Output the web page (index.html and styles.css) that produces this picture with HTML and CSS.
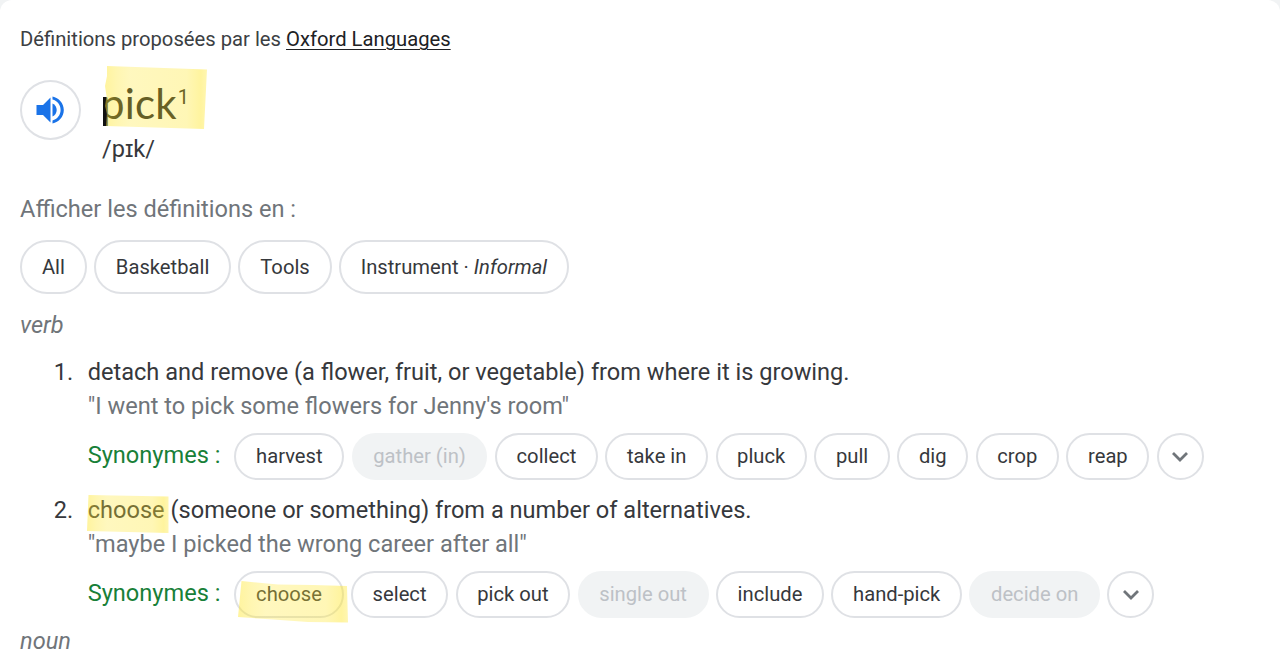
FILE: index.html
```html
<!DOCTYPE html>
<html lang="fr">
<head>
    <meta charset="UTF-8">
    <meta name="viewport" content="width=device-width, initial-scale=1.0">
    <title>pick - Définitions</title>
    <link rel="stylesheet" href="styles.css">
</head>
<body>
    <div class="card">
        <p class="source">Définitions proposées par les <a href="#">Oxford Languages</a></p>

        <div class="entry">
            <button class="audio" aria-label="Écouter">
                <svg width="30" height="30" viewBox="0 0 30 30" fill="#1a73e8">
                    <path d="M.5 10h6.500l7.500-7.500v25l-7.500-7.500H.5z"/>
                    <path d="M16.500 8.500c2.500 1.100 4.200 3.700 4.200 6.500s-1.700 5.400-4.200 6.500z"/>
                    <path d="M16.500 1.500c6.300 1.200 11.300 6.800 11.300 13.500S22.800 27.300 16.500 28.500v-3.100c4.800-1.200 8.100-5.400 8.100-10.400S21.300 5.800 16.500 4.600z"/>
                </svg>
            </button>
            <div>
                <h1 class="word"><span class="caret"></span>pick<sup>1</sup>
                    <svg class="mark mark-word" width="106" height="64" viewBox="0 0 106 64">
                        <path d="M6 0L106 3.500 103 63 5 60 6 48 4 40 5.500 30 4 20 6 10z"/>
                    </svg>
                </h1>
                <p class="phonetic">/pɪk/</p>
            </div>
        </div>

        <p class="show">Afficher les définitions en :</p>
        <div class="topics">
            <button class="chip">All</button>
            <button class="chip">Basketball</button>
            <button class="chip">Tools</button>
            <button class="chip">Instrument · <i>Informal</i></button>
        </div>

        <p class="pos">verb</p>
        <ol class="senses">
            <li>
                <p class="num">1.</p>
                <div>
                    <p class="definition">detach and remove (a flower, fruit, or vegetable) from where it is growing.</p>
                    <p class="example">"I went to pick some flowers for Jenny's room"</p>
                    <div class="synonyms">
                        <span class="label">Synonymes :</span>
                        <button class="chip">harvest</button>
                        <button class="chip off">gather (in)</button>
                        <button class="chip">collect</button>
                        <button class="chip">take in</button>
                        <button class="chip">pluck</button>
                        <button class="chip">pull</button>
                        <button class="chip">dig</button>
                        <button class="chip">crop</button>
                        <button class="chip">reap</button>
                        <button class="chip more" aria-label="Plus">
                            <svg width="18" height="12" viewBox="0 0 18 12"><path d="M2 2l7 7 7-7"/></svg>
                        </button>
                    </div>
                </div>
            </li>
            <li>
                <p class="num">2.</p>
                <div>
                    <p class="definition"><span class="marked">choose<svg class="mark mark-def" width="82" height="38" viewBox="0 0 82 38">
                        <path d="M1.500 0L81.500 1.500 81.500 38 0 36z"/>
                    </svg></span> (someone or something) from a number of alternatives.</p>
                    <p class="example">"maybe I picked the wrong career after all"</p>
                    <div class="synonyms">
                        <span class="label">Synonymes :</span>
                        <button class="chip marked">choose
                            <svg class="mark mark-chip" width="110" height="42" viewBox="0 0 110 42">
                                <path d="M3.500 0L40 3.500 75 4 109 5 110 41.500 70 41 35 38.500 0 36z"/>
                            </svg>
                        </button>
                        <button class="chip">select</button>
                        <button class="chip">pick out</button>
                        <button class="chip off">single out</button>
                        <button class="chip">include</button>
                        <button class="chip">hand-pick</button>
                        <button class="chip off">decide on</button>
                        <button class="chip more" aria-label="Plus">
                            <svg width="18" height="12" viewBox="0 0 18 12"><path d="M2 2l7 7 7-7"/></svg>
                        </button>
                    </div>
                </div>
            </li>
        </ol>
        <p class="pos">noun</p>
    </div>

    <!-- Shared fill for the highlighter marks -->
    <svg class="defs" width="0" height="0">
        <linearGradient id="marker">
            <stop offset="0" stop-color="#ffe628" stop-opacity=".45"/>
            <stop offset=".12" stop-color="#ffe628" stop-opacity=".36"/>
            <stop offset=".25" stop-color="#ffe628" stop-opacity=".3"/>
            <stop offset=".8" stop-color="#ffe628" stop-opacity=".34"/>
            <stop offset=".94" stop-color="#ffe628" stop-opacity=".45"/>
            <stop offset="1" stop-color="#ffe628" stop-opacity=".36"/>
        </linearGradient>
    </svg>
</body>
</html>
```

FILE: styles.css
```css
/* Global Styling */
body {
    margin: 0;
    background-color: #f1f3f4;
    color: #36383c;
    font-family: Roboto, sans-serif;
    font-size: 23.58px;
    overflow: hidden;
}

p, h1, ol {
    margin: 0;
    padding: 0;
    font-weight: normal;
}

.card {
    height: 629px;
    padding: 27px 20px 0;
    background-color: #fff;
    border-radius: 12px 12px 0 0;
}

.source {
    font-size: 20.23px;
    line-height: 24px;
    color: #3c4043;
}

.source a {
    color: #202124;
    text-decoration-thickness: 1px;
    text-underline-offset: 3px;
}

/* Headword */
.entry {
    display: flex;
    gap: 20px;
    height: 114px;
    padding-top: 29px;
}

.audio {
    display: flex;
    align-items: center;
    justify-content: center;
    width: 61px;
    height: 60px;
    padding: 0;
    border: 2px solid #dfe1e5;
    border-radius: 50%;
    background: none;
}

.word {
    position: relative;
    height: 50px;
    line-height: 47px;
    font-family: Lato, sans-serif;
    font-size: 42px;
    letter-spacing: 0.2px;
    color: #202124;
}

.word sup {
    margin-left: 1px;
    font-family: Roboto, sans-serif;
    font-size: 20px;
    line-height: 0;
    vertical-align: 15px;
}

.caret {
    position: absolute;
    top: 17px;
    left: 2px;
    width: 3px;
    height: 29px;
    background-color: #111;
}

.phonetic {
    padding-left: 1px;
    line-height: 38px;
}

/* Highlighter */
.mark {
    position: absolute;
    fill: url(#marker);
    pointer-events: none;
}

.mark-word {
    top: -14px;
    left: 0;
}

.mark-def {
    top: -1px;
    left: -1px;
}

.mark-chip {
    top: 8px;
    left: 2px;
}

.marked {
    position: relative;
}

.defs {
    position: absolute;
}

/* Chips */
.show {
    line-height: 30px;
    color: #70757a;
}

.topics {
    display: flex;
    gap: 7.2px;
    padding: 16px 0;
}

.chip {
    flex: none;
    height: 47px;
    padding: 0 19.6px 1px;
    border: 2px solid #dfe1e5;
    border-radius: 27px;
    background-color: transparent;
    color: #36383c;
    font-family: inherit;
    font-size: 20.2px;
    white-space: nowrap;
}

.topics .chip {
    height: 54px;
    padding: 0 19.9px;
}

.chip.off {
    border-color: #f1f3f4;
    background-color: #f1f3f4;
    color: #bdc1c6;
}

.chip.more {
    display: flex;
    align-items: center;
    justify-content: center;
    width: 47px;
    padding: 0;
}

.more path {
    fill: none;
    stroke: #70757a;
    stroke-width: 2.8;
}

/* Senses */
.pos {
    line-height: 30px;
    font-style: italic;
    color: #70757a;
}

.senses {
    padding-top: 15px;
    list-style: none;
}

.senses li {
    display: flex;
    height: 138px;
}

.senses li:last-child {
    height: 133px;
}

.num {
    width: 34px;
    padding-left: 33.7px;
    line-height: 34px;
}

.definition, .example {
    line-height: 34px;
}

.example {
    color: #70757a;
}

.synonyms {
    display: flex;
    gap: 7.5px;
    padding-top: 10px;
}

.label {
    width: 139.3px;
    line-height: 44px;
    color: #188038;
}
```
